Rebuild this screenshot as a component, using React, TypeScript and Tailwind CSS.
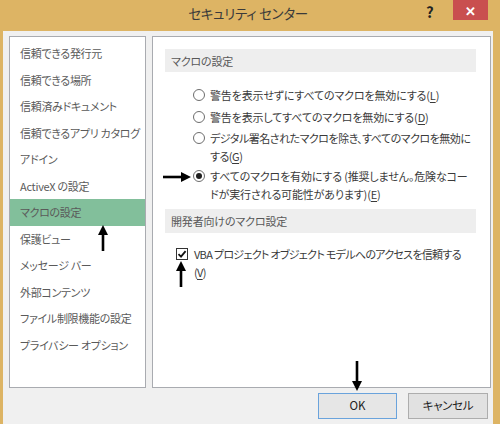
const font = "[font-family:'Noto_Sans_CJK_JP','Noto_Sans',sans-serif] [font-feature-settings:'palt']";

const navItems = [
  "信頼できる発行元",
  "信頼できる場所",
  "信頼済みドキュメント",
  "信頼できるアプリ カタログ",
  "アドイン",
  "ActiveX の設定",
  "マクロの設定",
  "保護ビュー",
  "メッセージ バー",
  "外部コンテンツ",
  "ファイル制限機能の設定",
  "プライバシー オプション",
];

function Radio({ checked }: { checked?: boolean }) {
  return (
    <span className="mt-[3px] flex h-[12px] w-[12px] shrink-0 items-center justify-center rounded-full border border-[#6d6d6d] bg-white">
      {checked ? <span className="h-[6px] w-[6px] rounded-full bg-[#1f1f1f]" /> : null}
    </span>
  );
}

function Key({ k }: { k: string }) {
  return (
    <>
      (<span className="underline underline-offset-2">{k}</span>)
    </>
  );
}

function Arrow({ dir, len }: { dir: "up" | "down" | "right"; len: number }) {
  // drawn pointing right, rotated for the other cases
  const rot = dir === "right" ? 0 : dir === "up" ? -90 : 90;
  return (
    <svg width={len} height={12} viewBox={`0 0 ${len} 12`} style={{ transform: `rotate(${rot}deg)` }}>
      <line x1={0} y1={6} x2={len - 8} y2={6} stroke="#000" strokeWidth={2.6} />
      <polygon points={`${len - 10},1 ${len},6 ${len - 10},11`} fill="#000" />
    </svg>
  );
}

export default function App() {
  return (
    <div className={`relative flex h-[424px] w-[500px] flex-col overflow-hidden bg-[#ddb464] ${font}`}>
      {/* title bar */}
      <div className="relative h-[31px] shrink-0">
        <div className="pr-[4px] pt-[3px] text-center text-[13.5px] leading-[20px] tracking-[-0.3px] text-[#3a3a3a]">
          セキュリティ センター
        </div>
        <div className="absolute left-[426px] top-[3px] text-[15px] font-bold leading-[18px] text-[#222]">?</div>
        <div className="absolute left-[453px] top-0 flex h-[20px] w-[35px] items-center justify-center bg-[#c94f4f] text-[13px] font-bold leading-none text-white">
          ✕
        </div>
      </div>

      {/* body */}
      <div className="ml-[3px] mr-[7px] flex flex-1 flex-col bg-[#f0f0f0] pl-[6px] pt-[5px]">
        <div className="flex h-[352px] gap-[6px]">
          {/* nav list */}
          <div className="w-[137px] shrink-0 border border-[#a9abb0] bg-white pt-[3px]">
            {navItems.map((item) => (
              <div
                key={item}
                className={`flex h-[26.5px] items-center whitespace-pre pl-[10px] text-[11px] tracking-[-0.3px] text-[#5a5a5a] ${
                  item === "マクロの設定" ? "bg-[#82bf9b]" : ""
                }`}
              >
                {item}
              </div>
            ))}
          </div>

          {/* settings */}
          <div className="w-[339px] shrink-0 border border-[#a9abb0] bg-white pl-[12px] pr-[14px] text-[11px] leading-[18px] tracking-[-0.15px] text-[#3a3a3a]">
            <div className="mt-[12px] flex h-[23px] items-center bg-[#eeeeee] pl-[6px] text-[#585858]">マクロの設定</div>

            <div className="ml-[28px] mt-[14px] flex gap-[5px]">
              <Radio />
              <span>
                警告を表示せずにすべてのマクロを無効にする<Key k="L" />
              </span>
            </div>
            <div className="ml-[28px] mt-[4px] flex gap-[5px]">
              <Radio />
              <span>
                警告を表示してすべてのマクロを無効にする<Key k="D" />
              </span>
            </div>
            <div className="ml-[28px] mt-[3px] flex gap-[5px]">
              <Radio />
              <span className="whitespace-nowrap tracking-[-0.5px]">
                デジタル署名されたマクロを除き、すべてのマクロを無効に
                <br />
                する<Key k="G" />
              </span>
            </div>
            <div className="ml-[28px] mt-[2px] flex gap-[5px]">
              <Radio checked />
              <span className="whitespace-nowrap">
                すべてのマクロを有効にする (推奨しません。危険なコー
                <br />
                ドが実行される可能性があります)<Key k="E" />
              </span>
            </div>

            <div className="mt-[6px] flex h-[24px] items-center bg-[#eeeeee] pl-[6px] text-[#585858]">
              開発者向けのマクロ設定
            </div>

            <div className="ml-[11px] mt-[12px] flex gap-[6px]">
              <span className="mt-[3px] flex h-[12px] w-[12px] shrink-0 items-center justify-center border border-[#333] bg-white">
                <svg width="10" height="10" viewBox="0 0 10 10">
                  <path d="M1.5 5.2 L4 7.6 L8.6 2.2" fill="none" stroke="#111" strokeWidth="1.8" />
                </svg>
              </span>
              <span className="whitespace-nowrap tracking-[-0.7px]">
                VBA プロジェクト オブジェクト モデルへのアクセスを信頼する
                <br />
                <Key k="V" />
              </span>
            </div>
          </div>
        </div>

        {/* buttons */}
        <div className="mt-[5px] flex justify-end gap-[11px] pr-[5px]">
          <button className="h-[26px] w-[79px] border border-[#6aa3dc] bg-[#e6e6e6] text-[11.5px] text-[#222]">OK</button>
          <button className="h-[26px] w-[80px] border border-[#adadad] bg-[#e1e1e1] text-[11.5px] tracking-[-0.3px] text-[#222]">
            キャンセル
          </button>
        </div>
      </div>

      {/* annotation arrows */}
      <div className="absolute left-[163px] top-[171px]">
        <Arrow dir="right" len={28} />
      </div>
      <div className="absolute left-[90px] top-[232px]">
        <Arrow dir="up" len={26} />
      </div>
      <div className="absolute left-[168px] top-[268px]">
        <Arrow dir="up" len={26} />
      </div>
      <div className="absolute left-[342px] top-[370px]">
        <Arrow dir="down" len={30} />
      </div>
    </div>
  );
}
